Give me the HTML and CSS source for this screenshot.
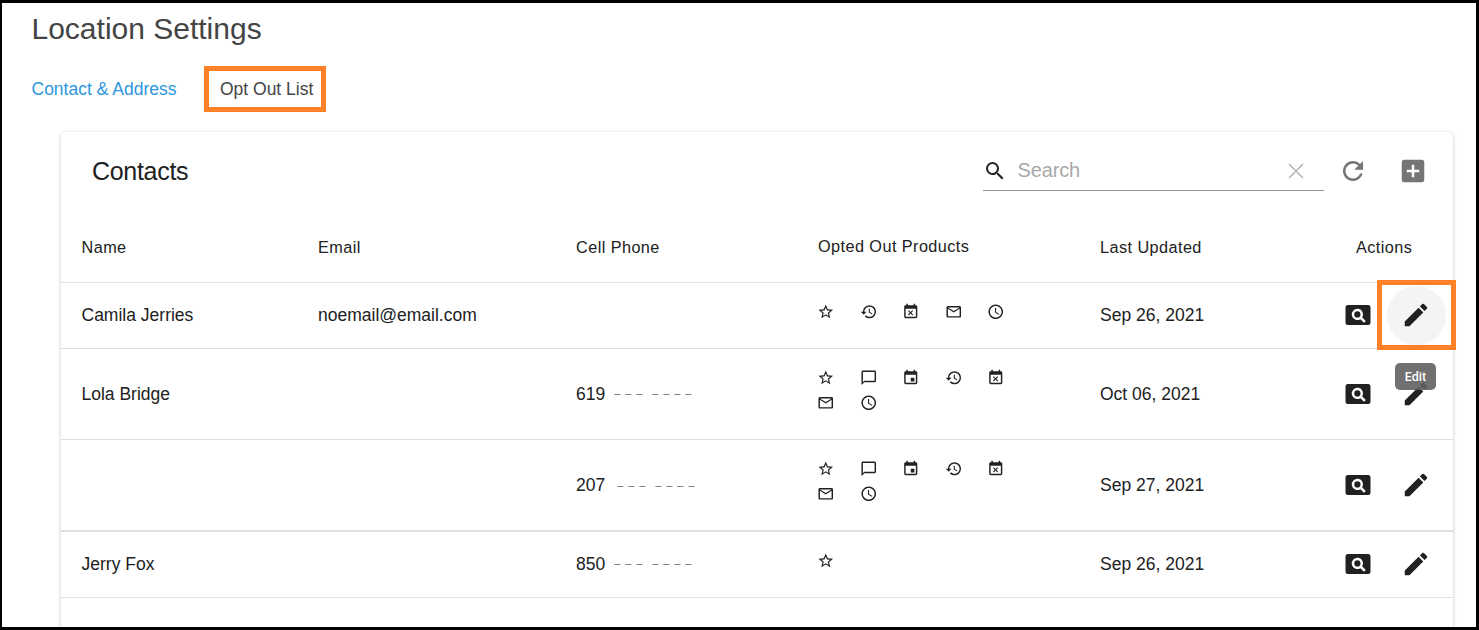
FILE: index.html
```html
<!DOCTYPE html>
<html lang="en">
<head>
<meta charset="utf-8">
<title>Location Settings</title>
<link rel="stylesheet" href="styles.css">
</head>
<body>
<svg class="sprite" aria-hidden="true">
  <symbol id="star" viewBox="0 0 24 24"><path d="M22 9.24l-7.19-.62L12 2 9.19 8.63 2 9.24l5.46 4.73L5.82 21 12 17.27 18.18 21l-1.63-7.03L22 9.24zM12 15.4l-3.76 2.27 1-4.28-3.32-2.88 4.38-.38L12 6.1l1.71 4.04 4.38.38-3.32 2.88 1 4.28L12 15.4z"/></symbol>
  <symbol id="history" viewBox="0 0 24 24"><path d="M13 3a9 9 0 0 0-9 9H1l3.89 3.89.07.14L9 12H6c0-3.87 3.13-7 7-7s7 3.13 7 7-3.13 7-7 7c-1.93 0-3.68-.79-4.94-2.06l-1.42 1.42A8.95 8.95 0 0 0 13 21a9 9 0 0 0 0-18zm-1 5v5l4.28 2.54.72-1.21-3.5-2.08V8H12z"/></symbol>
  <symbol id="busy" viewBox="0 0 24 24"><path d="M9.31 17l2.44-2.44L14.19 17l1.06-1.06-2.44-2.44 2.44-2.44L14.19 10l-2.44 2.44L9.31 10l-1.06 1.06 2.44 2.44-2.44 2.44L9.31 17zM19 3h-1V1h-2v2H8V1H6v2H5a2 2 0 0 0-2 2v14a2 2 0 0 0 2 2h14a2 2 0 0 0 2-2V5a2 2 0 0 0-2-2zm0 16H5V8h14v11z"/></symbol>
  <symbol id="event" viewBox="0 0 24 24"><path d="M17 12h-5v5h5v-5zM16 1v2H8V1H6v2H5a2 2 0 0 0-2 2v14a2 2 0 0 0 2 2h14a2 2 0 0 0 2-2V5a2 2 0 0 0-2-2h-1V1h-2zm3 18H5V8h14v11z"/></symbol>
  <symbol id="mail" viewBox="0 0 24 24"><path d="M22 6c0-1.100-.9-2-2-2H4c-1.100 0-2 .9-2 2v12c0 1.100.9 2 2 2h16c1.100 0 2-.9 2-2V6zm-2 0l-8 5-8-5h16zm0 12H4V8l8 5 8-5v10z"/></symbol>
  <symbol id="clock" viewBox="0 0 24 24"><path d="M11.990 2C6.470 2 2 6.480 2 12s4.470 10 9.990 10C17.520 22 22 17.520 22 12S17.520 2 11.990 2zM12 20c-4.420 0-8-3.580-8-8s3.580-8 8-8 8 3.580 8 8-3.580 8-8 8zm.5-13H11v6l5.250 3.150.75-1.230-4.500-2.670V7z"/></symbol>
  <symbol id="chat" viewBox="0 0 24 24"><path d="M20 2H4c-1.100 0-2 .9-2 2v18l4-4h14c1.100 0 2-.9 2-2V4c0-1.100-.9-2-2-2zm0 14H6l-2 2V4h16v12z"/></symbol>
  <symbol id="view" viewBox="0 0 24 24"><path d="M11.500 9a2.500 2.500 0 0 0 0 5 2.500 2.500 0 0 0 0-5zM20 4H4a2 2 0 0 0-2 2v12a2 2 0 0 0 2 2h16a2 2 0 0 0 2-2V6a2 2 0 0 0-2-2zm-3.210 14.210l-2.910-2.910a4.500 4.500 0 1 1 1.410-1.410l2.910 2.900-1.410 1.420z"/></symbol>
  <symbol id="edit" viewBox="0 0 24 24"><path d="M3 17.250V21h3.750L17.810 9.940l-3.750-3.750L3 17.250zM20.710 7.040a1 1 0 0 0 0-1.410l-2.340-2.340a1 1 0 0 0-1.410 0l-1.830 1.830 3.750 3.750 1.830-1.830z"/></symbol>
  <symbol id="search" viewBox="0 0 24 24"><path d="M15.500 14h-.79l-.28-.27A6.470 6.470 0 0 0 16 9.500 6.500 6.500 0 1 0 9.500 16c1.610 0 3.090-.59 4.230-1.570l.27.28v.79l5 4.990L20.490 19l-4.990-5zm-6 0a4.500 4.500 0 1 1 0-9 4.500 4.500 0 0 1 0 9z"/></symbol>
  <symbol id="refresh" viewBox="0 0 24 24"><path d="M17.650 6.350A8 8 0 1 0 19.730 14h-2.080A6 6 0 1 1 12 6c1.660 0 3.140.69 4.220 1.780L13 11h7V4l-2.350 2.350z"/></symbol>
  <symbol id="add" viewBox="0 0 24 24"><path d="M19 3H5a2 2 0 0 0-2 2v14a2 2 0 0 0 2 2h14a2 2 0 0 0 2-2V5a2 2 0 0 0-2-2zm-2 10h-4v4h-2v-4H7v-2h4V7h2v4h4v2z"/></symbol>
</svg>

<div class="page">
  <h1 class="title">Location Settings</h1>
  <nav class="tabs">
    <a class="tab">Contact &amp; Address</a>
    <a class="tab tab-active">Opt Out List</a>
  </nav>

  <section class="card">
    <header class="toolbar">
      <h2 class="card-title">Contacts</h2>
      <div class="search">
        <svg class="search-icon"><use href="#search"/></svg>
        <span class="placeholder">Search</span>
        <svg class="clear" viewBox="0 0 16 16"><path d="M1 1l14 14M15 1L1 15"/></svg>
      </div>
      <svg class="tool refresh"><use href="#refresh"/></svg>
      <svg class="tool"><use href="#add"/></svg>
    </header>

    <div class="row head">
      <span>Name</span><span>Email</span><span>Cell Phone</span><span class="head-products">Opted Out Products</span><span>Last Updated</span><span class="head-actions">Actions</span>
    </div>

    <div class="row short">
      <span>Camila Jerries</span><span>noemail@email.com</span><span></span>
      <div class="products">
        <svg><use href="#star"/></svg><svg><use href="#history"/></svg><svg><use href="#busy"/></svg><svg><use href="#mail"/></svg><svg><use href="#clock"/></svg>
      </div>
      <span>Sep 26, 2021</span>
      <div class="actions">
        <svg><use href="#view"/></svg>
        <div class="edit edit-hover"><svg><use href="#edit"/></svg><div class="highlight"></div><div class="tooltip">Edit</div></div>
      </div>
    </div>

    <div class="row tall">
      <span>Lola Bridge</span><span></span>
      <span class="phone">619<span class="mask">– – –&nbsp; – – – –</span></span>
      <div class="products">
        <svg><use href="#star"/></svg><svg><use href="#chat"/></svg><svg><use href="#event"/></svg><svg><use href="#history"/></svg><svg><use href="#busy"/></svg><svg><use href="#mail"/></svg><svg><use href="#clock"/></svg>
      </div>
      <span>Oct 06, 2021</span>
      <div class="actions"><svg><use href="#view"/></svg><div class="edit"><svg><use href="#edit"/></svg></div></div>
    </div>

    <div class="row tall thick">
      <span></span><span></span>
      <span class="phone">207<span class="mask mask-wide">– – –&nbsp; – – – –</span></span>
      <div class="products">
        <svg><use href="#star"/></svg><svg><use href="#chat"/></svg><svg><use href="#event"/></svg><svg><use href="#history"/></svg><svg><use href="#busy"/></svg><svg><use href="#mail"/></svg><svg><use href="#clock"/></svg>
      </div>
      <span>Sep 27, 2021</span>
      <div class="actions"><svg><use href="#view"/></svg><div class="edit"><svg><use href="#edit"/></svg></div></div>
    </div>

    <div class="row short">
      <span>Jerry Fox</span><span></span>
      <span class="phone">850<span class="mask">– – –&nbsp; – – – –</span></span>
      <div class="products"><svg><use href="#star"/></svg></div>
      <span>Sep 26, 2021</span>
      <div class="actions"><svg><use href="#view"/></svg><div class="edit"><svg><use href="#edit"/></svg></div></div>
    </div>
  </section>
</div>
</body>
</html>
```
FILE: styles.css
```css
* { box-sizing: border-box; }

body {
  margin: 0;
  font-family: "Liberation Sans", Arial, sans-serif;
  font-size: 17.5px;
  line-height: 20px;
  color: #212121;
  background: #fff;
}

.sprite { display: none; }

svg { display: block; flex: none; fill: currentColor; }

.page {
  display: flex;
  flex-direction: column;
  height: 630px;
  overflow: hidden;
  border: 3px solid #000;
  border-left-width: 2px;
}

.title {
  margin: 8px 0 0 29.5px;
  font-size: 30px;
  line-height: 36px;
  font-weight: 400;
  color: #444;
}

.tabs {
  display: flex;
  align-items: center;
  gap: 27.500px;
  height: 46px;
  margin: 19px 0 20px 29.5px;
}

.tab { color: #2c97de; }

.tab-active {
  width: 122px;
  height: 46px;
  padding: 8px 0 0 11px;
  border: 5px solid #ff8127;
  color: #444;
}

.card {
  flex: none;
  width: 1392px;
  height: 520px;
  margin-left: 59px;
  border-radius: 5px;
  box-shadow: 0 2px 5px rgba(0, 0, 0, .16), 0 0 3px rgba(0, 0, 0, .08);
}

.toolbar {
  display: flex;
  align-items: center;
  height: 80px;
  padding: 0 25px 2px 31px;
}

.card-title {
  margin: 0 auto 0 0;
  font-size: 25px;
  line-height: 30px;
  font-weight: 400;
  letter-spacing: -.3px;
}

.search {
  display: flex;
  align-items: center;
  width: 341px;
  height: 40px;
  padding-right: 20px;
  border-bottom: 1px solid #8f8f8f;
}

.search-icon { width: 24px; height: 24px; }

.placeholder {
  flex: 1;
  margin: -1px 0 0 10.500px;
  font-size: 20px;
  letter-spacing: -.15px;
  color: #a8a8a8;
}

.clear {
  width: 16px;
  height: 16px;
  margin: 1px 0 0;
  fill: none;
  stroke: #b5b5b5;
  stroke-width: 1.6;
}

.tool { width: 30px; height: 30px; color: #757575; }
.refresh { margin: 0 30px 0 14px; }

.row {
  display: grid;
  grid-template-columns: 236.500px 258px 242px 282px 230px 1fr;
  align-items: center;
  height: 66px;
  padding-left: 20.500px;
  border-bottom: 1px solid #e0e0e0;
}

.short { padding-bottom: 1px; }
.tall { height: 91px; }
.thick { height: 92px; border-bottom-width: 2px; }

.head {
  height: 71px;
  font-size: 16.250px;
  letter-spacing: .43px;
}

.head-products { margin-top: -2px; }
.head-actions { margin-left: 26px; }

.products {
  display: flex;
  flex-wrap: wrap;
  align-items: center;
  column-gap: 25px;
  row-gap: 7.500px;
  width: 200px;
  margin: 0 0 6px -.8px;
}

.tall .products { margin-bottom: 7px; }

.products svg { width: 17.500px; height: 17.500px; }

.phone { display: flex; align-items: center; }

.mask {
  margin: -3px 0 0 9px;
  font-size: 11px;
  word-spacing: 1.850px;
  color: #666;
}

.mask-wide { margin: -1px 0 0 12px; }

.actions {
  display: flex;
  align-items: center;
  height: 60px;
  margin-left: 12.500px;
}

.actions svg { width: 30px; height: 30px; }

.edit {
  position: relative;
  display: flex;
  align-items: center;
  justify-content: center;
  flex: none;
  width: 59px;
  height: 59px;
  margin-left: 14.500px;
  padding-right: 1px;
  border-radius: 50%;
}

.edit-hover { background: #f4f4f4; }

.highlight {
  position: absolute;
  top: -5.500px;
  left: -10px;
  width: 79px;
  height: 70px;
  border: 5px solid #ff8127;
}

.tooltip {
  position: absolute;
  z-index: 1;
  top: 77.500px;
  left: 8px;
  width: 41px;
  height: 27px;
  border-radius: 5px;
  background: rgba(97, 97, 97, .9);
  color: #fff;
  font: 500 12.500px/27px Roboto, sans-serif;
  text-align: center;
}
```
